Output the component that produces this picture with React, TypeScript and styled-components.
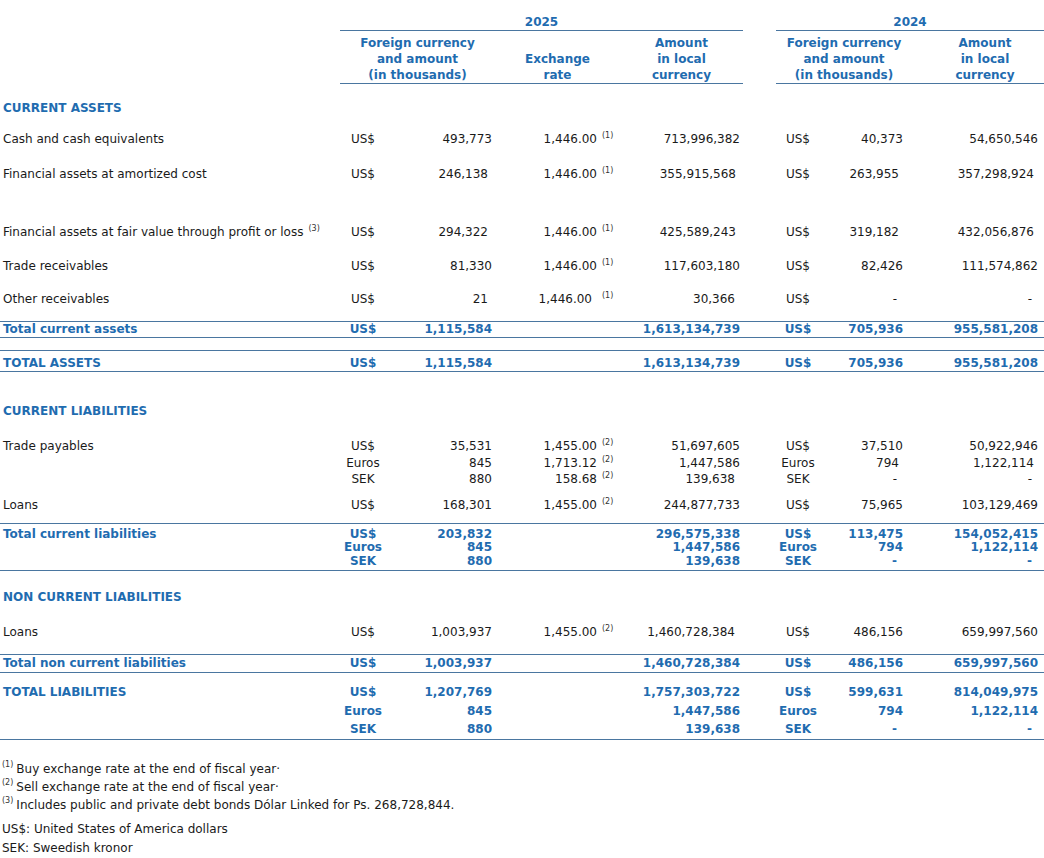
import React from "react";
import styled, { createGlobalStyle } from "styled-components";

const Global = createGlobalStyle`
  html, body { margin: 0; padding: 0; background: #fff; }
  body { font-family: "DejaVu Sans", Verdana, sans-serif; font-size: 12px; color: #1a1a1a; }
`;

const BLUE = "#1f6cb0";
const LINE = "#4a76a0";

const Page = styled.div`
  width: 1044px;
`;

const Grid = styled.div<{ $mt?: number; $pt?: number; $pb?: number; $bt?: boolean; $bb?: boolean; $lh?: number }>`
  display: grid;
  grid-template-columns: 340px 46px 109px 125px 123px 33px 44px 92px 132px;
  margin-top: ${(p) => p.$mt ?? 0}px;
  padding-top: ${(p) => p.$pt ?? 0}px;
  padding-bottom: ${(p) => p.$pb ?? 0}px;
  border-top: ${(p) => (p.$bt ? `1px solid ${LINE}` : "none")};
  border-bottom: ${(p) => (p.$bb ? `1px solid ${LINE}` : "none")};
  line-height: ${(p) => p.$lh ?? 16}px;
`;

const HeadCell = styled.div<{ $span: number; $lines?: boolean; $pt?: number; $pb?: number; $pl?: number }>`
  grid-column: span ${(p) => p.$span};
  display: flex;
  flex-direction: column;
  justify-content: flex-end;
  align-items: center;
  text-align: center;
  font-weight: bold;
  color: ${BLUE};
  padding-top: ${(p) => p.$pt ?? 0}px;
  padding-bottom: ${(p) => p.$pb ?? 0}px;
  padding-left: ${(p) => p.$pl ?? 0}px;
  border-bottom: ${(p) => (p.$lines ? `1px solid ${LINE}` : "none")};
`;

const Blank = styled.div<{ $span?: number }>`
  grid-column: span ${(p) => p.$span ?? 1};
`;

const Label = styled.div<{ $bold?: boolean }>`
  padding-left: 3px;
  white-space: nowrap;
  font-weight: ${(p) => (p.$bold ? "bold" : "normal")};
  color: ${(p) => (p.$bold ? BLUE : "inherit")};
`;

const Stack = styled.div<{ $align: "left" | "center" | "right"; $pr?: number; $bold?: boolean }>`
  display: flex;
  flex-direction: column;
  text-align: ${(p) => p.$align};
  padding-right: ${(p) => p.$pr ?? 0}px;
  white-space: nowrap;
  font-weight: ${(p) => (p.$bold ? "bold" : "normal")};
  color: ${(p) => (p.$bold ? BLUE : "inherit")};
`;

const Val = styled.span<{ $nudge?: number }>`
  display: block;
  padding-right: ${(p) => p.$nudge ?? 0}px;
`;

const RateCell = styled.div`
  display: flex;
  flex-direction: column;
  align-items: flex-end;
  white-space: nowrap;
`;

const RateLine = styled.div`
  display: flex;
  align-items: flex-start;
`;

const Rate = styled.span<{ $nudge?: number }>`
  padding-right: ${(p) => p.$nudge ?? 0}px;
`;

const NoteMark = styled.span<{ $w?: number }>`
  display: inline-block;
  width: ${(p) => p.$w ?? 23}px;
  padding-left: 5px;
  padding-top: 1px;
  box-sizing: border-box;
  font-size: 8px;
  line-height: 1;
  vertical-align: top;
  color: #333;
`;

const Sup = styled.sup`
  font-size: 8px;
  line-height: 1;
  vertical-align: top;
  position: relative;
  top: 1px;
  color: #333;
  margin-right: 3px;
`;

const Section = styled.div`
  grid-column: span 9;
  padding-left: 3px;
  font-weight: bold;
  color: ${BLUE};
`;

const Notes = styled.div<{ $mt: number; $lh: number }>`
  margin-top: ${(p) => p.$mt}px;
  line-height: ${(p) => p.$lh}px;
  padding-left: 2px;
`;

type V = string | [string, number];
type RowData = {
  label?: string;
  note?: string;
  bold?: boolean;
  cur25: string[];
  amt25: V[];
  rate?: { v: string; n: string; nudge?: number }[];
  loc25: V[];
  cur24: string[];
  amt24: V[];
  loc24: V[];
};

const vals = (list: V[]) =>
  list.map((v, i) =>
    typeof v === "string" ? (
      <Val key={i}>{v}</Val>
    ) : (
      <Val key={i} $nudge={v[1]}>
        {v[0]}
      </Val>
    )
  );

const DataRow: React.FC<{ d: RowData; mt?: number; pt?: number; pb?: number; bt?: boolean; bb?: boolean; lh?: number }> = ({
  d,
  mt,
  pt,
  pb,
  bt,
  bb,
  lh,
}) => (
  <Grid $mt={mt} $pt={pt} $pb={pb} $bt={bt} $bb={bb} $lh={lh}>
    <Label $bold={d.bold}>
      {d.label}
      {d.note && <NoteMark $w={16}>{d.note}</NoteMark>}
    </Label>
    <Stack $align="center" $bold={d.bold}>
      {d.cur25.map((c, i) => (
        <span key={i}>{c}</span>
      ))}
    </Stack>
    <Stack $align="right" $pr={3} $bold={d.bold}>
      {vals(d.amt25)}
    </Stack>
    <RateCell>
      {(d.rate ?? []).map((r, i) => (
        <RateLine key={i}>
          <Rate $nudge={r.nudge}>{r.v}</Rate>
          <NoteMark>{r.n}</NoteMark>
        </RateLine>
      ))}
    </RateCell>
    <Stack $align="right" $pr={3} $bold={d.bold}>
      {vals(d.loc25)}
    </Stack>
    <Blank />
    <Stack $align="center" $bold={d.bold}>
      {d.cur24.map((c, i) => (
        <span key={i}>{c}</span>
      ))}
    </Stack>
    <Stack $align="right" $pr={9} $bold={d.bold}>
      {vals(d.amt24)}
    </Stack>
    <Stack $align="right" $pr={6} $bold={d.bold}>
      {vals(d.loc24)}
    </Stack>
  </Grid>
);

const R1 = "(1)";
const R2 = "(2)";

export default function App() {
  return (
    <Page>
      <Global />
      <Grid $lh={15}>
        <Blank />
        <HeadCell $span={4} $lines $pt={15}>
          2025
        </HeadCell>
        <Blank />
        <HeadCell $span={3} $lines $pt={15}>
          2024
        </HeadCell>
      </Grid>
      <Grid $lh={16}>
        <Blank />
        <HeadCell $span={2} $lines $pt={4}>
          <span>Foreign currency</span>
          <span>and amount</span>
          <span>(in thousands)</span>
        </HeadCell>
        <HeadCell $span={1} $lines>
          <span>Exchange</span>
          <span>rate</span>
        </HeadCell>
        <HeadCell $span={1} $lines>
          <span>Amount</span>
          <span>in local</span>
          <span>currency</span>
        </HeadCell>
        <Blank />
        <HeadCell $span={2} $lines>
          <span>Foreign currency</span>
          <span>and amount</span>
          <span>(in thousands)</span>
        </HeadCell>
        <HeadCell $span={1} $lines $pl={14}>
          <span>Amount</span>
          <span>in local</span>
          <span>currency</span>
        </HeadCell>
      </Grid>

      <Grid $pt={16}>
        <Section>CURRENT ASSETS</Section>
      </Grid>
      <DataRow
        pt={15}
        d={{
          label: "Cash and cash equivalents",
          cur25: ["US$"],
          amt25: ["493,773"],
          rate: [{ v: "1,446.00", n: R1 }],
          loc25: ["713,996,382"],
          cur24: ["US$"],
          amt24: ["40,373"],
          loc24: ["54,650,546"],
        }}
      />
      <DataRow
        pt={19}
        d={{
          label: "Financial assets at amortized cost",
          cur25: ["US$"],
          amt25: [["246,138", 4]],
          rate: [{ v: "1,446.00", n: R1 }],
          loc25: [["355,915,568", 4]],
          cur24: ["US$"],
          amt24: [["263,955", 4]],
          loc24: [["357,298,924", 4]],
        }}
      />
      <DataRow
        pt={42}
        d={{
          label: "Financial assets at fair value through profit or loss",
          note: "(3)",
          cur25: ["US$"],
          amt25: [["294,322", 4]],
          rate: [{ v: "1,446.00", n: R1 }],
          loc25: [["425,589,243", 4]],
          cur24: ["US$"],
          amt24: [["319,182", 4]],
          loc24: [["432,056,876", 4]],
        }}
      />
      <DataRow
        pt={18}
        d={{
          label: "Trade receivables",
          cur25: ["US$"],
          amt25: ["81,330"],
          rate: [{ v: "1,446.00", n: R1 }],
          loc25: ["117,603,180"],
          cur24: ["US$"],
          amt24: ["82,426"],
          loc24: ["111,574,862"],
        }}
      />
      <DataRow
        pt={17}
        pb={14}
        d={{
          label: "Other receivables",
          cur25: ["US$"],
          amt25: [["21", 4]],
          rate: [{ v: "1,446.00", n: R1, nudge: 5 }],
          loc25: [["30,366", 5]],
          cur24: ["US$"],
          amt24: [["-", 6]],
          loc24: [["-", 6]],
        }}
      />
      <DataRow
        bt
        bb
        lh={14}
        pb={1}
        d={{
          label: "Total current assets",
          bold: true,
          cur25: ["US$"],
          amt25: ["1,115,584"],
          loc25: ["1,613,134,739"],
          cur24: ["US$"],
          amt24: ["705,936"],
          loc24: ["955,581,208"],
        }}
      />
      <DataRow
        mt={12}
        bt
        bb
        lh={14}
        pt={5}
        pb={1}
        d={{
          label: "TOTAL ASSETS",
          bold: true,
          cur25: ["US$"],
          amt25: ["1,115,584"],
          loc25: ["1,613,134,739"],
          cur24: ["US$"],
          amt24: ["705,936"],
          loc24: ["955,581,208"],
        }}
      />

      <Grid $mt={31}>
        <Section>CURRENT LIABILITIES</Section>
      </Grid>
      <DataRow
        pt={19}
        lh={16.5}
        d={{
          label: "Trade payables",
          cur25: ["US$", "Euros", "SEK"],
          amt25: ["35,531", "845", "880"],
          rate: [
            { v: "1,455.00", n: R2 },
            { v: "1,713.12", n: R2 },
            { v: "158.68", n: R2 },
          ],
          loc25: ["51,697,605", "1,447,586", ["139,638", 5]],
          cur24: ["US$", "Euros", "SEK"],
          amt24: ["37,510", ["794", 4], ["-", 6]],
          loc24: ["50,922,946", ["1,122,114", 4], ["-", 6]],
        }}
      />
      <DataRow
        pt={9}
        d={{
          label: "Loans",
          cur25: ["US$"],
          amt25: ["168,301"],
          rate: [{ v: "1,455.00", n: R2 }],
          loc25: ["244,877,733"],
          cur24: ["US$"],
          amt24: ["75,965"],
          loc24: ["103,129,469"],
        }}
      />
      <DataRow
        mt={10}
        bt
        bb
        lh={13.5}
        pt={4}
        pb={2}
        d={{
          label: "Total current liabilities",
          bold: true,
          cur25: ["US$", "Euros", "SEK"],
          amt25: ["203,832", "845", "880"],
          loc25: ["296,575,338", "1,447,586", "139,638"],
          cur24: ["US$", "Euros", "SEK"],
          amt24: ["113,475", "794", ["-", 6]],
          loc24: ["154,052,415", "1,122,114", ["-", 6]],
        }}
      />

      <Grid $mt={18}>
        <Section>NON CURRENT LIABILITIES</Section>
      </Grid>
      <DataRow
        pt={19}
        d={{
          label: "Loans",
          cur25: ["US$"],
          amt25: ["1,003,937"],
          rate: [{ v: "1,455.00", n: R2 }],
          loc25: [["1,460,728,384", 5]],
          cur24: ["US$"],
          amt24: ["486,156"],
          loc24: ["659,997,560"],
        }}
      />
      <DataRow
        mt={14}
        bt
        bb
        lh={14}
        pt={1}
        pb={2}
        d={{
          label: "Total non current liabilities",
          bold: true,
          cur25: ["US$"],
          amt25: ["1,003,937"],
          loc25: ["1,460,728,384"],
          cur24: ["US$"],
          amt24: ["486,156"],
          loc24: ["659,997,560"],
        }}
      />
      <DataRow
        bb
        lh={18.5}
        pt={10}
        d={{
          label: "TOTAL LIABILITIES",
          bold: true,
          cur25: ["US$", "Euros", "SEK"],
          amt25: ["1,207,769", "845", "880"],
          loc25: ["1,757,303,722", "1,447,586", "139,638"],
          cur24: ["US$", "Euros", "SEK"],
          amt24: ["599,631", "794", ["-", 6]],
          loc24: ["814,049,975", "1,122,114", ["-", 6]],
        }}
      />

      <Notes $mt={20} $lh={18}>
        <div>
          <Sup>(1)</Sup>Buy exchange rate at the end of fiscal year·
        </div>
        <div>
          <Sup>(2)</Sup>Sell exchange rate at the end of fiscal year·
        </div>
        <div>
          <Sup>(3)</Sup>Includes public and private debt bonds Dólar Linked for Ps. 268,728,844.
        </div>
      </Notes>
      <Notes $mt={6} $lh={19}>
        <div>US$: United States of America dollars</div>
        <div>SEK: Sweedish kronor</div>
      </Notes>
    </Page>
  );
}
